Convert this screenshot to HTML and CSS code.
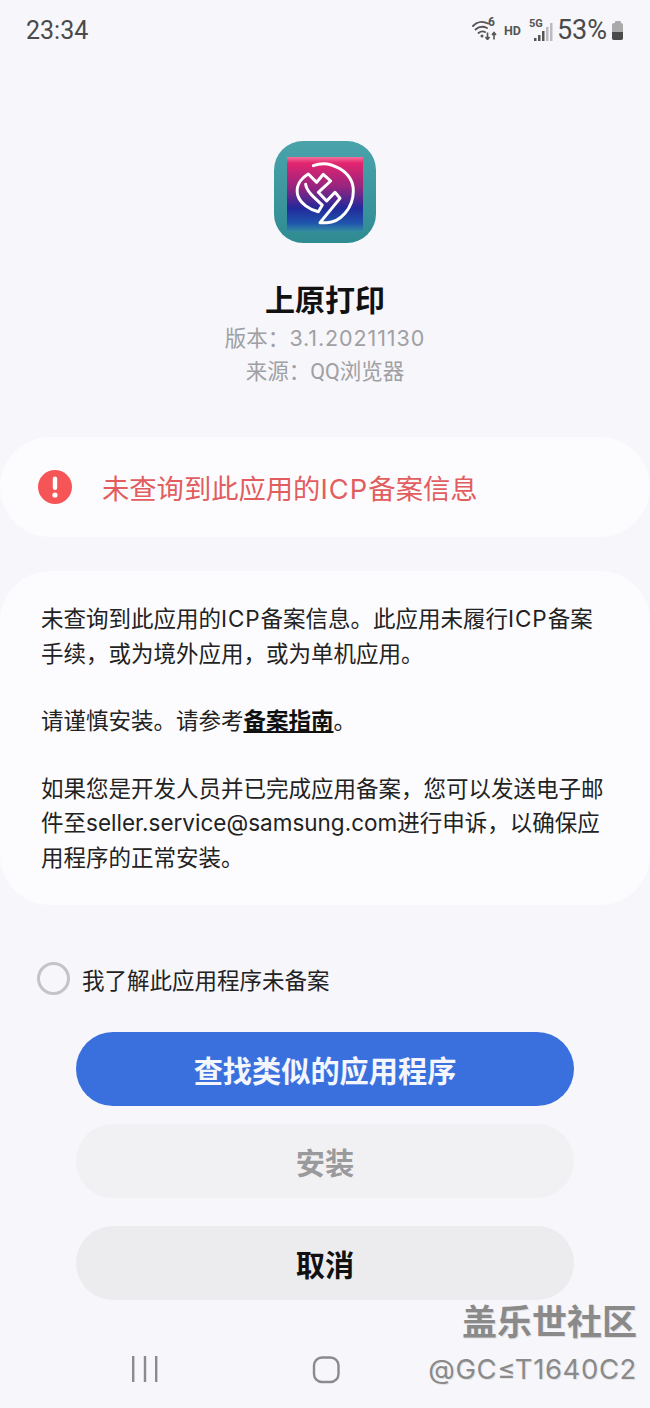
FILE: index.html
```html
<!DOCTYPE html>
<html lang="zh-CN">
<head>
<meta charset="utf-8">
<title>上原打印</title>
<link rel="stylesheet" href="styles.css">
</head>
<body>
<div class="screen">
  <header class="status">
    <span class="time">23:34</span>
    <div class="status-right">
      <svg class="wifi" viewBox="0 0 26 20" width="26" height="20">
        <g fill="none" stroke="#555" stroke-width="1.900" stroke-linecap="round">
          <path d="M1 6 C5 1.500 11 1 16 3.500"/>
          <path d="M3.500 9.500 C7 6.500 11 6 15 8"/>
          <path d="M6.500 13 C9 11 11 11 13 12"/>
        </g>
        <circle cx="10" cy="16" r="1.500" fill="#555"/>
        <g fill="none" stroke="#555" stroke-width="1.600">
          <path d="M15.500 12.500 V19.500 M13.500 17 L15.500 19.500 L17.500 17"/>
          <path d="M22 19.500 V12.500 M20 15 L22 12.500 L24 15"/>
        </g>
      </svg>
      <span class="wifi-six">6</span>
      <span class="hd">HD</span>
      <span class="net">
        <span class="fiveg">5G</span>
        <svg class="bars" viewBox="0 0 19 18" width="19" height="18">
          <rect x="0" y="15" width="2.500" height="3" fill="#555"/>
          <rect x="4" y="12" width="2.500" height="6" fill="#555"/>
          <rect x="8" y="8" width="2.500" height="10" fill="#555"/>
          <rect x="12" y="4" width="2.500" height="14" fill="#bcbcc0"/>
          <rect x="16" y="0" width="2.500" height="18" fill="#bcbcc0"/>
        </svg>
      </span>
      <span class="pct">53%</span>
      <span class="battery"><span class="battery-cap"></span><span class="battery-body"><span class="battery-fill"></span></span></span>
    </div>
  </header>

  <section class="app">
    <svg class="logo" viewBox="274 141 102 102" width="102" height="102">
      <defs>
        <linearGradient id="tile" x1="0" y1="0" x2="0" y2="1">
          <stop offset="0" stop-color="#4aa3ab"/>
          <stop offset="1" stop-color="#2f8b92"/>
        </linearGradient>
        <linearGradient id="inner" x1="0" y1="0" x2="0" y2="1">
          <stop offset="0" stop-color="#f4729c"/>
          <stop offset="0.08" stop-color="#e4256f"/>
          <stop offset="0.4" stop-color="#96247f"/>
          <stop offset="0.68" stop-color="#22299a"/>
          <stop offset="0.88" stop-color="#1f54ac"/>
          <stop offset="1" stop-color="#348f9f"/>
        </linearGradient>
      </defs>
      <rect x="274" y="141" width="102" height="102" rx="29" fill="url(#tile)"/>
      <rect x="287" y="157" width="76" height="75" fill="url(#inner)"/>
      <g transform="translate(285 155) scale(0.3333)" fill="none" stroke="#fff" stroke-width="9" stroke-linejoin="round" stroke-linecap="round">
        <path d="M85 32 C135 12 205 50 205 108 C205 160 165 203 125 203 L105 203 L165 130 L150 112 L125 138 L100 112 L137 78 L115 58 L95 82 L70 57 C45 72 32 95 38 120 C45 145 75 165 100 170 L112 150 C90 130 65 110 62 88"/>
      </g>
    </svg>
    <h1 class="app-name">上原打印</h1>
    <p class="app-meta">版本：<span class="version">3.1.20211130</span></p>
    <p class="app-meta app-source">来源：QQ浏览器</p>
  </section>

  <section class="card alert">
    <svg class="alert-icon" viewBox="0 0 34 34" width="34" height="34">
      <circle cx="17" cy="17" r="17" fill="#f65558"/>
      <rect x="14.800" y="6.500" width="4.400" height="13.500" rx="2.200" fill="#fff"/>
      <circle cx="17" cy="25" r="2.600" fill="#fff"/>
    </svg>
    <span class="alert-text">未查询到此应用的<span class="icp">ICP</span>备案信息</span>
  </section>

  <section class="card detail">
    <p class="para">未查询到此应用的<span class="icp">ICP</span>备案信息。此应用未履行<span class="icp">ICP</span>备案手续，或为境外应用，或为单机应用。</p>
    <p class="para">请谨慎安装。请参考<a class="guide">备案指南</a>。</p>
    <p class="para">如果您是开发人员并已完成应用备案，您可以发送电子邮件至seller.service@samsung.com进行申诉，以确保应用程序的正常安装。</p>
  </section>

  <label class="confirm">
    <span class="radio"></span>
    <span class="confirm-text">我了解此应用程序未备案</span>
  </label>

  <div class="actions">
    <button class="btn primary">查找类似的应用程序</button>
    <button class="btn disabled">安装</button>
    <button class="btn cancel">取消</button>
  </div>

  <nav class="navbar">
    <svg class="nav-recent" viewBox="0 0 28 26" width="28" height="26">
      <g fill="#8b8b8e"><rect x="1" y="0" width="2.400" height="26"/><rect x="12.800" y="0" width="2.400" height="26"/><rect x="24" y="0" width="2.400" height="26"/></g>
    </svg>
    <svg class="nav-home" viewBox="0 0 28 28" width="28" height="28">
      <rect x="2" y="1.500" width="24.500" height="24.500" rx="8" fill="none" stroke="#8b8b8e" stroke-width="2.400"/>
    </svg>
  </nav>

  <div class="watermark">
    <div class="wm-title">盖乐世社区</div>
    <div class="wm-user">@GC≤T1640C2</div>
  </div>
</div>
</body>
</html>
```

FILE: styles.css
```css
* { box-sizing: border-box; }
html, body { margin: 0; padding: 0; }
body {
  width: 650px;
  height: 1408px;
  overflow: hidden;
  background: #f6f6fb;
  font-family: Inter, "Noto Sans CJK SC", sans-serif;
  color: #1c1c1c;
}
.screen { position: relative; width: 650px; height: 1408px; }

.status {
  height: 60px;
  padding: 0 27px 0 26px;
  display: flex;
  align-items: center;
  justify-content: space-between;
  color: #4a4a4a;
  font-family: Roboto, sans-serif;
}
.time { font-size: 25px; }
.status-right { display: flex; align-items: center; position: relative; }
.wifi { display: block; }
.wifi-six { position: absolute; left: 16px; top: 2px; font-size: 12px; font-weight: 700; color: #555; line-height: 12px; }
.hd { width: 17px; font-size: 12.500px; font-weight: 700; color: #555; margin-left: 6px; }
.net { margin-left: 8px; position: relative; width: 24px; height: 24px; }
.fiveg { position: absolute; left: 0; top: 0; font-size: 11px; font-weight: 700; color: #555; line-height: 11px; }
.bars { position: absolute; right: 0; bottom: 1px; }
.pct { font-size: 27px; margin-left: 4px; }
.battery { display: flex; flex-direction: column; align-items: center; margin-left: 5px; }
.battery-cap { width: 6px; height: 2px; background: #aaa; border-radius: 1px 1px 0 0; }
.battery-body { width: 11px; height: 17px; background: #aaa; border-radius: 2px; display: flex; align-items: flex-end; overflow: hidden; }
.battery-fill { width: 100%; height: 8px; background: #4a4a4a; }

.app { display: flex; flex-direction: column; align-items: center; padding-top: 81px; }
.logo { display: block; filter: blur(.6px); }
.app-name { margin: 35px 0 0; font-size: 30px; line-height: 44px; font-weight: 700; color: #111; }
.app-meta { margin: 0; font-size: 21.500px; line-height: 33px; color: #a0a0a3; }
.version { letter-spacing: .9px; }
.app-source { font-family: Roboto, "Noto Sans CJK SC", sans-serif; }

.card { background: #fcfcfe; border-radius: 50px; }
.alert {
  margin-top: 49px;
  height: 100px;
  padding-left: 38px;
  display: flex;
  align-items: center;
}
.alert-text { margin-left: 30px; font-size: 27.300px; color: #e25d5e; }
.icp { letter-spacing: .04em; }

.detail { margin-top: 34px; height: 334px; padding: 31px 41px 0; }
.para { margin: 0 0 33px; font-size: 22.500px; line-height: 34.500px; color: #222; }
.guide { font-weight: 700; color: #111; text-decoration: underline; }

.confirm { display: flex; align-items: center; margin-top: 57px; padding-left: 37px; height: 33px; }
.radio { width: 33px; height: 33px; border: 3px solid #c4c4c8; border-radius: 50%; }
.confirm-text { margin-left: 12px; font-size: 22.500px; color: #222; }

.actions { margin-top: 37px; padding: 0 76px; display: flex; flex-direction: column; }
.btn {
  display: block;
  width: 498px;
  height: 74px;
  border: 0;
  border-radius: 37px;
  font-family: inherit;
  font-size: 29.200px;
  font-weight: 700;
}
.primary { background: #3a70dd; color: #f3f6fd; }
.disabled { margin-top: 18px; background: #f1f1f4; color: #9a9a9c; }
.cancel { margin-top: 28px; background: #ececef; color: #111; }

.navbar { position: absolute; left: 0; top: 1356px; width: 650px; height: 28px; }
.nav-recent { position: absolute; left: 131px; top: 0; }
.nav-home { position: absolute; left: 312px; top: 0; }

.watermark {
  position: absolute;
  right: 13px;
  top: 1299px;
  text-align: right;
  color: #8a8a8a;
  text-shadow: 1px 1px 0 #e2e2e2;
}
.wm-title { font-size: 35px; line-height: 46px; font-weight: 700; }
.wm-user { font-size: 27.500px; line-height: 48px; font-weight: 400; letter-spacing: .6px; }
```
